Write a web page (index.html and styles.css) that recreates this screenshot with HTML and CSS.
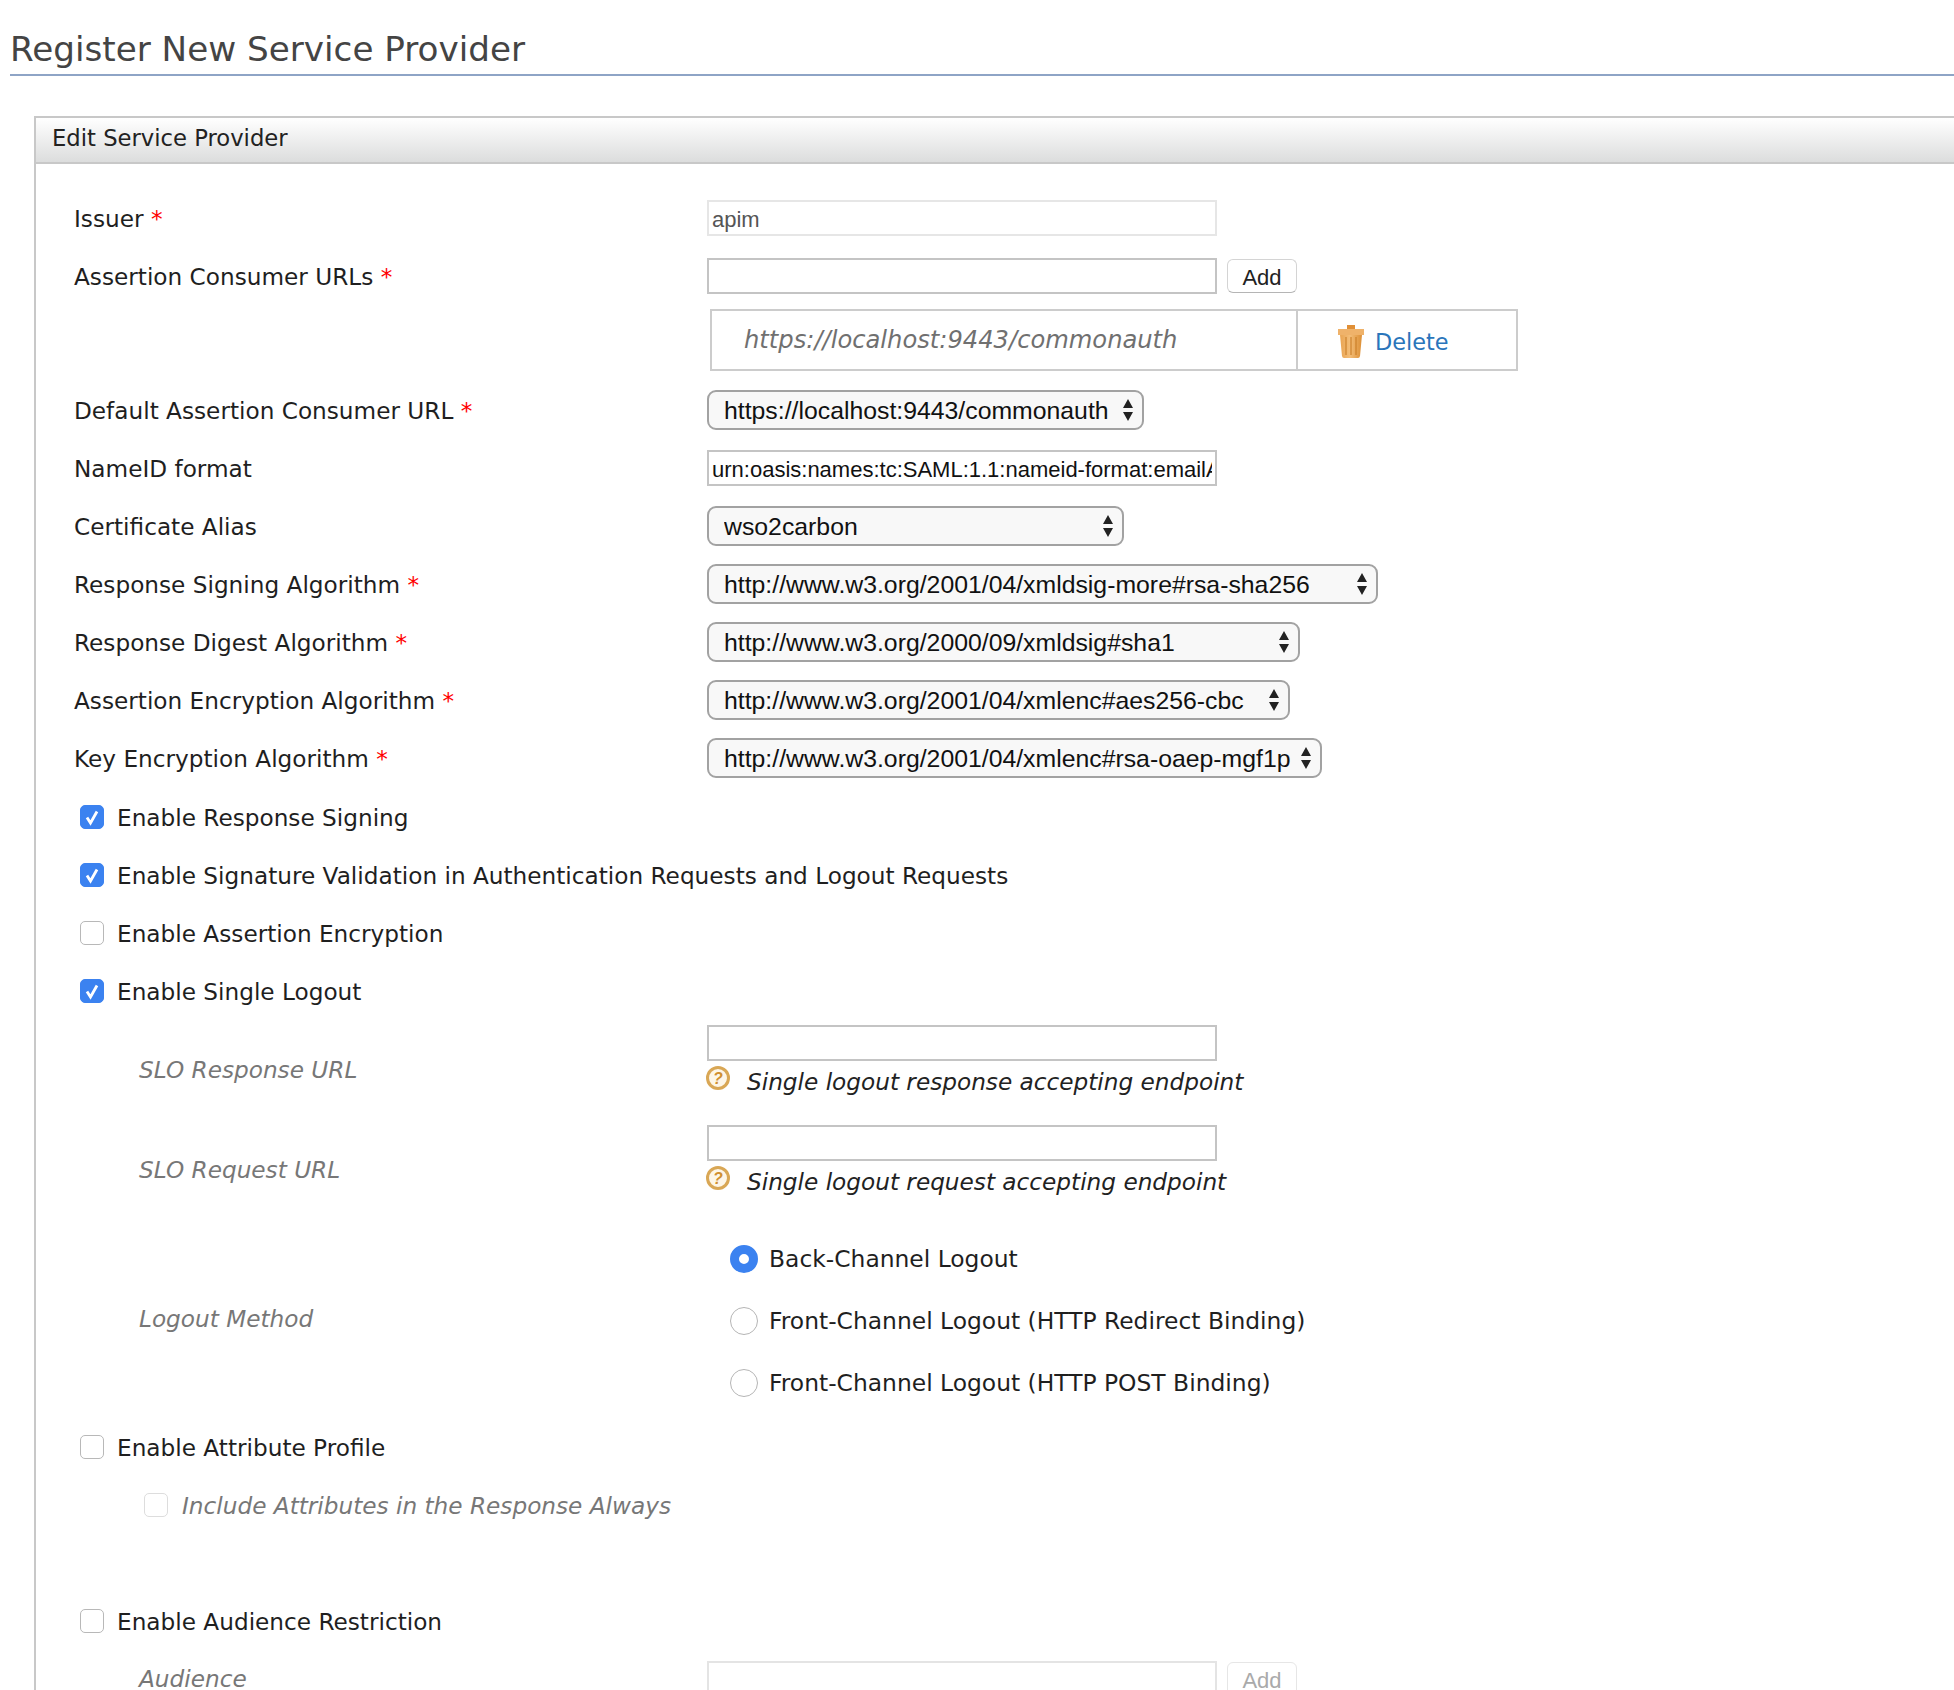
FILE: index.html
```html
<!DOCTYPE html>
<html lang="en">
<head>
    <meta charset="UTF-8">
    <title>Register New Service Provider</title>
    <link rel="stylesheet" href="styles.css">
</head>
<body>
    <h2 class="page-title">Register New Service Provider</h2>

    <div class="box">
        <div class="box-header">Edit Service Provider</div>
        <form class="box-body">
            <div class="row">
                <label class="field-label">Issuer <span class="req">*</span></label>
                <input class="text-input readonly" type="text" value="apim" readonly>
            </div>
            <div class="row">
                <label class="field-label">Assertion Consumer URLs <span class="req">*</span></label>
                <input class="text-input" type="text">
                <button class="add-btn" type="button">Add</button>
            </div>
            <div class="url-table">
                <div class="url-cell">https://localhost:9443/commonauth</div>
                <div class="delete-cell">
                    <svg class="trash" width="28" height="33" viewBox="0 0 28 33">
                        <defs>
                            <linearGradient id="trashFill" x1="0" x2="1" y1="0" y2="0">
                                <stop offset="0" stop-color="#e9a452"/>
                                <stop offset="0.45" stop-color="#f3bd78"/>
                                <stop offset="1" stop-color="#dc8f35"/>
                            </linearGradient>
                        </defs>
                        <path d="M10 0h8v4h-8z" fill="#e08f36"/>
                        <path d="M1 4h26v6H1z" fill="#efb26a"/>
                        <path d="M3 10h22l-2 21q-.3 2-2 2H7q-1.700 0-2-2z" fill="url(#trashFill)"/>
                        <path d="M9 12v18M14 12v18M19 12v18" stroke="#c97c25" stroke-width="1.500" opacity=".7"/>
                    </svg>
                    <a class="delete-link" href="#">Delete</a>
                </div>
            </div>
            <div class="row">
                <label class="field-label">Default Assertion Consumer URL <span class="req">*</span></label>
                <select class="select-box w-default">
                    <option>https://localhost:9443/commonauth</option>
                </select>
            </div>
            <div class="row">
                <label class="field-label">NameID format</label>
                <input class="text-input" type="text" value="urn:oasis:names:tc:SAML:1.1:nameid-format:emailAddress">
            </div>
            <div class="row">
                <label class="field-label">Certificate Alias</label>
                <select class="select-box w-alias">
                    <option>wso2carbon</option>
                </select>
            </div>
            <div class="row">
                <label class="field-label">Response Signing Algorithm <span class="req">*</span></label>
                <select class="select-box w-sign">
                    <option>http://www.w3.org/2001/04/xmldsig-more#rsa-sha256</option>
                </select>
            </div>
            <div class="row">
                <label class="field-label">Response Digest Algorithm <span class="req">*</span></label>
                <select class="select-box w-digest">
                    <option>http://www.w3.org/2000/09/xmldsig#sha1</option>
                </select>
            </div>
            <div class="row">
                <label class="field-label">Assertion Encryption Algorithm <span class="req">*</span></label>
                <select class="select-box w-encr">
                    <option>http://www.w3.org/2001/04/xmlenc#aes256-cbc</option>
                </select>
            </div>
            <div class="row">
                <label class="field-label">Key Encryption Algorithm <span class="req">*</span></label>
                <select class="select-box w-key">
                    <option>http://www.w3.org/2001/04/xmlenc#rsa-oaep-mgf1p</option>
                </select>
            </div>

            <div class="check-row first-check">
                <input class="check" type="checkbox" checked>
                <label>Enable Response Signing</label>
            </div>
            <div class="check-row">
                <input class="check" type="checkbox" checked>
                <label>Enable Signature Validation in Authentication Requests and Logout Requests</label>
            </div>
            <div class="check-row">
                <input class="check" type="checkbox">
                <label>Enable Assertion Encryption</label>
            </div>
            <div class="check-row">
                <input class="check" type="checkbox" checked>
                <label>Enable Single Logout</label>
            </div>

            <div class="slo-row slo-first">
                <label class="sub-label">SLO Response URL</label>
                <div class="slo-field">
                    <input class="text-input" type="text">
                    <div class="hint">
                        <svg class="help" width="24" height="24" viewBox="0 0 24 24">
                            <circle cx="12" cy="12" r="10.500" fill="#fdf6e8" stroke="#d9a755" stroke-width="3"/>
                            <text x="12" y="18" text-anchor="middle" font-size="16" font-family="Liberation Sans, sans-serif" font-weight="700" fill="#d08f2f">?</text>
                        </svg>
                        <span>Single logout response accepting endpoint</span>
                    </div>
                </div>
            </div>
            <div class="slo-row">
                <label class="sub-label">SLO Request URL</label>
                <div class="slo-field">
                    <input class="text-input" type="text">
                    <div class="hint">
                        <svg class="help" width="24" height="24" viewBox="0 0 24 24">
                            <circle cx="12" cy="12" r="10.500" fill="#fdf6e8" stroke="#d9a755" stroke-width="3"/>
                            <text x="12" y="18" text-anchor="middle" font-size="16" font-family="Liberation Sans, sans-serif" font-weight="700" fill="#d08f2f">?</text>
                        </svg>
                        <span>Single logout request accepting endpoint</span>
                    </div>
                </div>
            </div>

            <div class="method-row">
                <label class="sub-label">Logout Method</label>
                <div class="radio-list">
                    <div class="radio-row">
                        <input class="radio" type="radio" name="logout" checked>
                        <label>Back-Channel Logout</label>
                    </div>
                    <div class="radio-row">
                        <input class="radio" type="radio" name="logout">
                        <label>Front-Channel Logout (HTTP Redirect Binding)</label>
                    </div>
                    <div class="radio-row">
                        <input class="radio" type="radio" name="logout">
                        <label>Front-Channel Logout (HTTP POST Binding)</label>
                    </div>
                </div>
            </div>

            <div class="check-row">
                <input class="check" type="checkbox">
                <label>Enable Attribute Profile</label>
            </div>
            <div class="check-row sub-check">
                <input class="check" type="checkbox" disabled>
                <label>Include Attributes in the Response Always</label>
            </div>
            <div class="check-row audience-check">
                <input class="check" type="checkbox">
                <label>Enable Audience Restriction</label>
            </div>
            <div class="audience-row">
                <label class="sub-label">Audience</label>
                <input class="text-input faded" type="text" disabled>
                <button class="add-btn faded-btn" type="button" disabled>Add</button>
            </div>
        </form>
    </div>
</body>
</html>
```

FILE: styles.css
```css
html, body {
    margin: 0;
    padding: 0;
    height: 1690px;
    overflow: hidden;
    background: #fff;
}
body {
    font-family: "DejaVu Sans", sans-serif;
    font-size: 23.2px;
    color: #1f1f1f;
}
.page-title {
    margin: 0 0 40px 10px;
    height: 76px;
    box-sizing: border-box;
    padding-top: 24px;
    border-bottom: 2px solid #8ea4c6;
    font-size: 34.2px;
    line-height: 50px;
    font-weight: normal;
    color: #444;
}
.box {
    margin-left: 34px;
    margin-right: -20px;
    border: 2px solid #c8c8c8;
    border-bottom: none;
    height: 1600px;
}
.box-header {
    height: 44px;
    line-height: 40px;
    padding-left: 16px;
    border-bottom: 2px solid #c8c8c8;
    background: linear-gradient(#ffffff, #dcdddd);
    font-size: 22.700px;
    color: #222;
}
.box-body {
    display: block;
    padding: 25px 0 0 38px;
}
.row {
    display: flex;
    align-items: center;
    height: 58px;
}
.field-label {
    width: 633px;
    flex: none;
}
.req {
    color: #f00;
}
.text-input {
    box-sizing: border-box;
    width: 510px;
    height: 36px;
    margin: 0;
    padding: 3px 3px 0;
    border: 2px solid #c4c4c4;
    border-radius: 0;
    background: #fff;
    font-family: "Liberation Sans", sans-serif;
    font-size: 22px;
    color: #111;
    outline: none;
}
.readonly {
    border-color: #e6e6e6;
    color: #555;
}
.add-btn {
    box-sizing: border-box;
    width: 70px;
    height: 34px;
    margin-left: 10px;
    padding: 3px 0 0;
    border: 1px solid #d4d4d4;
    border-bottom-color: #b5b5b5;
    border-radius: 6px;
    background: #fff;
    font-family: "Liberation Sans", sans-serif;
    font-size: 22px;
    color: #222;
}
.url-table {
    display: flex;
    box-sizing: border-box;
    width: 808px;
    height: 62px;
    margin: 4px 0 10px 636px;
    border: 2px solid #ccc;
}
.url-cell {
    box-sizing: border-box;
    width: 586px;
    padding-left: 32px;
    border-right: 2px solid #ccc;
    font-size: 24.200px;
    line-height: 59px;
    font-style: italic;
    color: #707070;
}
.delete-cell {
    display: flex;
    align-items: center;
    padding: 2px 0 0 39px;
}
.trash {
    margin-right: 10px;
}
.delete-link {
    padding-top: 2px;
    font-size: 22.400px;
    color: #2a75bb;
    text-decoration: none;
}
.select-box {
    box-sizing: border-box;
    height: 40px;
    margin: 0;
    padding: 0 0 0 15px;
    border: 2px solid #a2a2a2;
    border-radius: 9px;
    appearance: none;
    background-color: #f8f8f8;
    background-image: url("data:image/svg+xml,%3Csvg xmlns='http://www.w3.org/2000/svg' width='12' height='22'%3E%3Cpath d='M6 0l5 9H1zM6 22l5-9H1z' fill='%23222'/%3E%3C/svg%3E");
    background-repeat: no-repeat;
    background-position: right 8px center;
    font-family: "Liberation Sans", sans-serif;
    font-size: 24.800px;
    color: #111;
}
.w-default { width: 437px; }
.w-alias { width: 417px; }
.w-sign { width: 671px; }
.w-digest { width: 593px; }
.w-encr { width: 583px; }
.w-key { width: 615px; }

.check-row {
    display: flex;
    align-items: center;
    height: 58px;
    padding-left: 6px;
}
.first-check {
    margin-top: 1px;
}
.check {
    flex: none;
    box-sizing: border-box;
    width: 24px;
    height: 24px;
    margin: 0 13px 0 0;
    border: 1px solid #b8b8b8;
    border-radius: 5px;
    appearance: none;
    background: #fff;
}
.check:checked {
    border-color: #3b82f0;
    background-color: #3b82f0;
    background-image: url("data:image/svg+xml,%3Csvg xmlns='http://www.w3.org/2000/svg' width='22' height='22'%3E%3Cpath d='M6 11.500l3.500 5.500L16 5.500' fill='none' stroke='%23fff' stroke-width='2.800'/%3E%3C/svg%3E");
    background-position: center;
}
.sub-check {
    padding-left: 70px;
    font-style: italic;
    color: #777;
}
.sub-check .check {
    margin-right: 14px;
    border-color: #ddd;
}
.audience-check {
    margin-top: 58px;
}

.sub-label {
    width: 568px;
    flex: none;
    padding-left: 65px;
    font-style: italic;
    color: #777;
}
.slo-row {
    display: flex;
    align-items: center;
    height: 100px;
}
.slo-first {
    margin-top: -1px;
}
.slo-field {
    align-self: flex-start;
    width: 800px;
    padding-top: 6px;
}
.hint {
    display: flex;
    align-items: center;
    height: 36px;
    margin-top: 2px;
    font-style: italic;
    color: #222;
}
.help {
    flex: none;
    margin: 0 17px 6px -1px;
}
.method-row {
    display: flex;
    align-items: center;
    height: 194px;
    margin-top: 5px;
}
.method-row .sub-label {
    margin-bottom: 5px;
}
.radio-list {
    padding-left: 23px;
    font-size: 23.400px;
}
.radio-row {
    display: flex;
    align-items: center;
    height: 62px;
}
.radio {
    flex: none;
    box-sizing: border-box;
    width: 28px;
    height: 28px;
    margin: 0 11px 0 0;
    border: 1px solid #b5b5b5;
    border-radius: 50%;
    appearance: none;
    background: #fff;
}
.radio:checked {
    border: 9px solid #3b82f0;
}
.audience-row {
    display: flex;
    align-items: flex-start;
    margin-top: 11px;
}
.audience-row .sub-label {
    line-height: 36px;
}
.faded {
    border-color: #e4e4e4;
}
.faded-btn {
    margin-top: 1px;
    border-color: #e6e6e6;
    color: #aaa;
}
```
